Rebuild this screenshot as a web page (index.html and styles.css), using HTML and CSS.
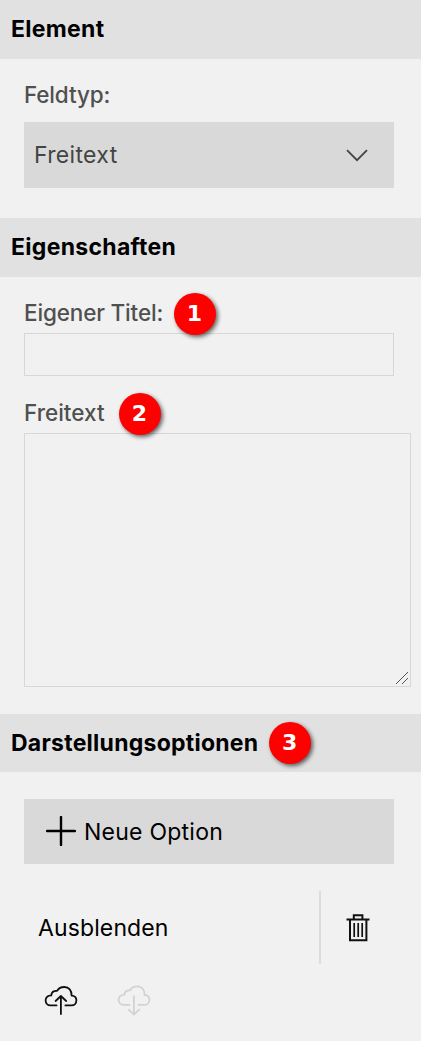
FILE: index.html
```html
<!DOCTYPE html>
<html lang="de">
<head>
<meta charset="utf-8">
<title>Element</title>
<link rel="stylesheet" href="styles.css">
</head>
<body>
<main class="panel">
  <h2 class="heading">Element</h2>
  <section class="group group-type">
    <div class="label"><span class="label-caption label-colon">Feldtyp:</span></div>
    <div class="select"><span>Freitext</span>
      <svg class="chevron" width="22" height="13" viewBox="0 0 22 13"><path d="M1 1.2 11 11.2 21 1.2"/></svg>
    </div>
  </section>
  <h2 class="heading">Eigenschaften</h2>
  <section class="group group-props">
    <div class="label"><span class="label-caption label-colon label-title">Eigener Titel:</span><b class="badge badge-title">1</b></div>
    <div class="input"></div>
    <div class="label label-text"><span class="label-caption label-free">Freitext</span><b class="badge badge-text">2</b></div>
    <div class="textarea">
      <svg class="grip" width="12" height="12" viewBox="0 0 12 12" shape-rendering="crispEdges"><path d="M0 12 12 0M6 12 12 6"/></svg>
    </div>
  </section>
  <h2 class="heading heading-options"><span class="heading-caption">Darstellungsoptionen</span><b class="badge badge-options">3</b></h2>
  <section class="group group-options">
    <div class="button">
      <svg class="plus" width="30" height="30" viewBox="0 0 30 30"><path d="M15 1V29M1 15H29"/></svg>
      <span>Neue Option</span>
    </div>
    <div class="option">
      <span class="option-name">Ausblenden</span>
      <span class="option-delete">
        <svg class="trash" width="24" height="28" viewBox="0 0 24 28"><path d="M.5 5.4H23.5M7.8 5V1.2H16.4V5M4 6V26.2H20.4V6"/><path class="slats" d="M8.2 9V23M12.2 9V23M16.2 9V23"/></svg>
      </span>
    </div>
    <div class="clouds">
      <svg class="cloud" width="34" height="32" viewBox="0 0 34 32"><path d="M12.5 20.4H6.5C3.4 20.4 1.6 18 1.6 15.3 1.6 12.4 3.9 10.3 7.3 10.4 7.5 7.5 9.5 5.7 13.1 5.9 14.5 3.3 17 2 20.4 2 24.9 2 27.8 5.4 27.6 10.6 30.6 10.5 32.4 12.5 32.4 15.3 32.4 18.4 30.3 20.4 27.6 20.4H21.4"/><path d="M16.9 29V11.2M11.6 16 16.9 11 22.2 16"/></svg>
      <svg class="cloud cloud-off" width="34" height="32" viewBox="0 0 34 32"><path d="M12.5 19.8H6.5C3.4 19.8 1.6 17.4 1.6 14.7 1.6 11.8 3.9 9.7 7.3 9.8 7.5 6.9 9.5 5.1 13.1 5.3 14.5 2.7 17 1.4 20.4 1.4 24.9 1.4 27.8 4.8 27.6 10 30.6 9.9 32.4 11.9 32.4 14.7 32.4 17.8 30.3 19.8 27.6 19.8H21.4"/><path d="M16.9 11.2V29.4M11.6 24.6 16.9 29.6 22.2 24.6"/></svg>
    </div>
  </section>
</main>
</body>
</html>
```
FILE: styles.css
```css
* { box-sizing: border-box; }
body { margin: 0; background: #f1f1f1; font: 400 23px/28px Inter, sans-serif; color: #000; }
.panel { width: 421px; height: 1041px; overflow: hidden; }
.heading { margin: 0; height: 59px; padding: 15px 0 0 11px; background: #e1e1e1; font-size: 23px; line-height: 28px; font-weight: 700; letter-spacing: .3px; }
.heading-options { display: flex; height: 58px; }
.heading-caption { width: 248px; letter-spacing: .25px; }
.group { padding-left: 24px; }
.group-type { height: 159px; padding-top: 22px; }
.label { display: flex; height: 28px; color: #505050; }
.label-caption { font-size: 22.5px; line-height: 28px; font-weight: 450; }
.label-colon { letter-spacing: -.16px; }
.label-title { width: 139px; white-space: nowrap; }
.label-free { width: 80px; letter-spacing: 0; }
.select { display: flex; align-items: center; justify-content: space-between; width: 370px; height: 66px; margin-top: 13px; padding: 0 26px 0 10px; background: #d9d9d9; color: #444; letter-spacing: .33px; }
.chevron, .plus, .trash, .cloud, .grip { display: block; fill: none; stroke: #111; }
.chevron { stroke: #444; stroke-width: 1.8; }
.group-props { height: 437px; padding-top: 22px; }
.input { width: 370px; height: 43px; margin-top: 6px; border: 1px solid #d7d7d7; }
.label-text { margin-top: 23px; }
.textarea { display: flex; align-items: flex-end; justify-content: flex-end; width: 387px; height: 254px; margin-top: 6px; padding: 0 2px 2px 0; border: 1px solid #d7d7d7; }
.grip { stroke: #555; }
.badge { flex: none; width: 42px; height: 42px; border-radius: 50%; background: #f00; color: #fff; box-shadow: 2px 2px 4px rgba(0, 0, 0, .6); font: 700 22px/42px "DejaVu Sans", sans-serif; letter-spacing: 0; text-align: center; }
.badge-title { margin: -5.6px 0 0 10.5px; }
.badge-text { margin: -5.6px 0 0 14.5px; }
.badge-options { margin: -7.4px 0 0 9.6px; }
.group-options { padding-top: 27px; }
.button { display: flex; align-items: center; width: 370px; height: 65px; padding-left: 22px; background: #d9d9d9; letter-spacing: .24px; }
.plus { margin: -2px 8px 0 0; stroke: #000; stroke-width: 2.4; stroke-linecap: round; }
.option { display: flex; align-items: center; width: 370px; height: 73px; margin-top: 27px; padding-left: 14px; }
.option-name { width: 281px; letter-spacing: .12px; }
.option-delete { display: flex; align-items: center; height: 73px; padding-left: 25px; border-left: 2px solid #dcdcdc; }
.trash { stroke-width: 2; }
.slats { stroke-width: 1.7; }
.clouds { display: flex; gap: 39.4px; margin: 21px 0 0 20px; }
.cloud { stroke-width: 1.8; stroke-linecap: round; stroke-linejoin: round; }
.cloud-off { stroke: #d2d2d2; }
```
